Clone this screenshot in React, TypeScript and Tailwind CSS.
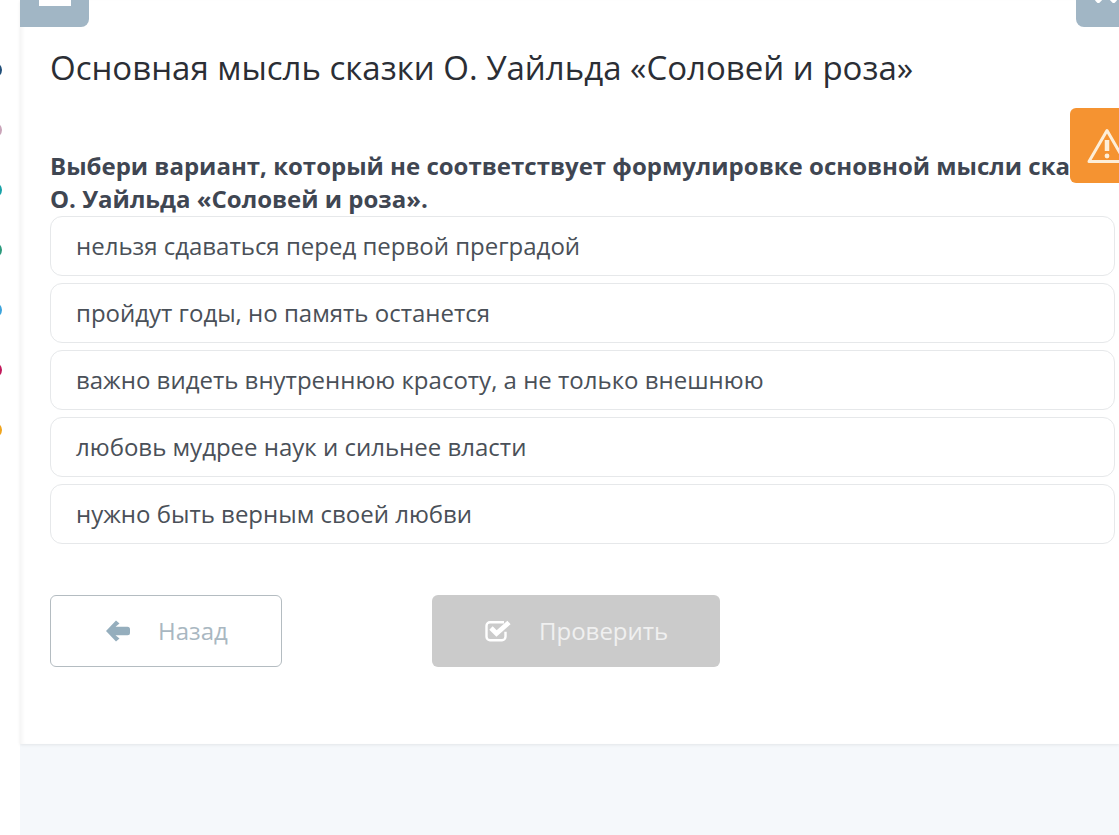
import { FaTimes } from "react-icons/fa";

const answers = [
  "нельзя сдаваться перед первой преградой",
  "пройдут годы, но память останется",
  "важно видеть внутреннюю красоту, а не только внешнюю",
  "любовь мудрее наук и сильнее власти",
  "нужно быть верным своей любви",
];

const dots = ["bg-[#1f4e79]", "bg-[#c9a3b8]", "bg-[#17a2a8]", "bg-[#2b9a7c]", "bg-[#3ba3dc]", "bg-[#c2185b]", "bg-[#f0a41c]"];

function BackArrow() {
  return (
    <svg viewBox="0 0 24 22" className="mr-[28px] h-[22px] w-6 shrink-0 text-[#95aebd]">
      <path d="M0 11 10 .5l3.500 3L9.500 6.800H21.500a2.500 2.500 0 0 1 2.500 2.500v3.400a2.500 2.500 0 0 1-2.500 2.500H9.500L13.500 18.500 10 21.500z" fill="currentColor" />
    </svg>
  );
}

function CheckBox() {
  return (
    <svg viewBox="0 0 26 22" fill="none" className="mr-[28px] h-[22px] w-[26px] shrink-0 text-white">
      <path d="M19 2.200H5a3.500 3.500 0 0 0-3.500 3.500v11a3.500 3.500 0 0 0 3.500 3.500h12a3.500 3.500 0 0 0 3.500-3.500v-5" stroke="currentColor" strokeWidth="2.400" />
      <path d="M6 8 11.500 13.500 24 2.500" stroke="currentColor" strokeWidth="4.800" />
    </svg>
  );
}

function WarningIcon() {
  return (
    <svg viewBox="0 0 40 36" fill="none" className="h-[36px] w-[40px] shrink-0 text-[#fdeed8]">
      <path d="M20 2.500 38 33.500H2z" stroke="currentColor" strokeWidth="3" strokeLinejoin="round" />
      <path d="M20 12v11" stroke="currentColor" strokeWidth="4.500" />
      <circle cx="20" cy="28" r="2.400" fill="currentColor" />
    </svg>
  );
}

export default function App() {
  return (
    <div className="relative flex h-[835px] w-full overflow-hidden bg-white font-['Open_Sans',sans-serif]">
      {/* Sidebar edge */}
      <div className="flex w-5 shrink-0 flex-col gap-[44px] pt-[62px]">
        {dots.map((c) => (
          <span key={c} className={`-ml-[14px] h-4 w-4 rounded-full ${c}`} />
        ))}
      </div>

      {/* Main */}
      <div className="flex min-w-0 flex-1 flex-col bg-[#f5f8fb]">
        <div className="h-[744px] overflow-hidden bg-white shadow-[0_1px_3px_rgba(0,0,0,0.08),inset_4px_0_4px_-2px_rgba(0,0,0,0.05)]">
          <div className="flex h-[27px] items-end justify-between">
            <div className="flex h-[27px] w-[69px] justify-center rounded-br-lg bg-[#a1b6c5]">
              <span className="h-[6px] w-8 bg-white" />
            </div>
            <div className="flex h-[27px] w-[43px] justify-center overflow-hidden rounded-bl-lg bg-[#a1b6c5] pl-4">
              <FaTimes className="-mt-[24px] shrink-0 text-[32px] text-white" />
            </div>
          </div>

          <div className="pl-[30px]">
            <h1 className="mt-[17px] text-[33px] leading-[48px] font-normal whitespace-nowrap text-[#2b2e35]">
              Основная мысль сказки О. Уайльда «Соловей и роза»
            </h1>
            <p className="mt-[57px] mb-[1px] text-[24px] leading-[33px] font-bold whitespace-nowrap text-[#3f4652]">
              Выбери вариант, который не соответствует формулировке основной мысли сказки
              <br />
              О. Уайльда «Соловей и роза».
            </p>

            <div className="flex w-[1065px] flex-col gap-[7px]">
              {answers.map((a) => (
                <div
                  key={a}
                  className="flex h-[60px] items-center rounded-xl border border-[#e6e8ea] pl-[25px] text-[24px] text-[#4a5058]"
                >
                  {a}
                </div>
              ))}
            </div>

            <div className="mt-[51px] flex gap-[150px]">
              <button className="flex h-[72px] w-[232px] items-center rounded-md border border-[#b4bcc1] pl-[55px] text-[24px] text-[#a9b7c1]">
                <BackArrow />
                Назад
              </button>
              <button className="flex h-[72px] w-[288px] items-center rounded-md bg-[#cbcbcb] pl-[53px] text-[24px] text-[#f0f0f0]">
                <CheckBox />
                Проверить
              </button>
            </div>
          </div>
        </div>
      </div>

      {/* Report badge */}
      <div className="absolute top-[108px] left-[1070px] flex h-[75px] w-[60px] items-center overflow-hidden rounded-l-md bg-[#f59331] pl-[17px]">
        <WarningIcon />
      </div>
    </div>
  );
}
